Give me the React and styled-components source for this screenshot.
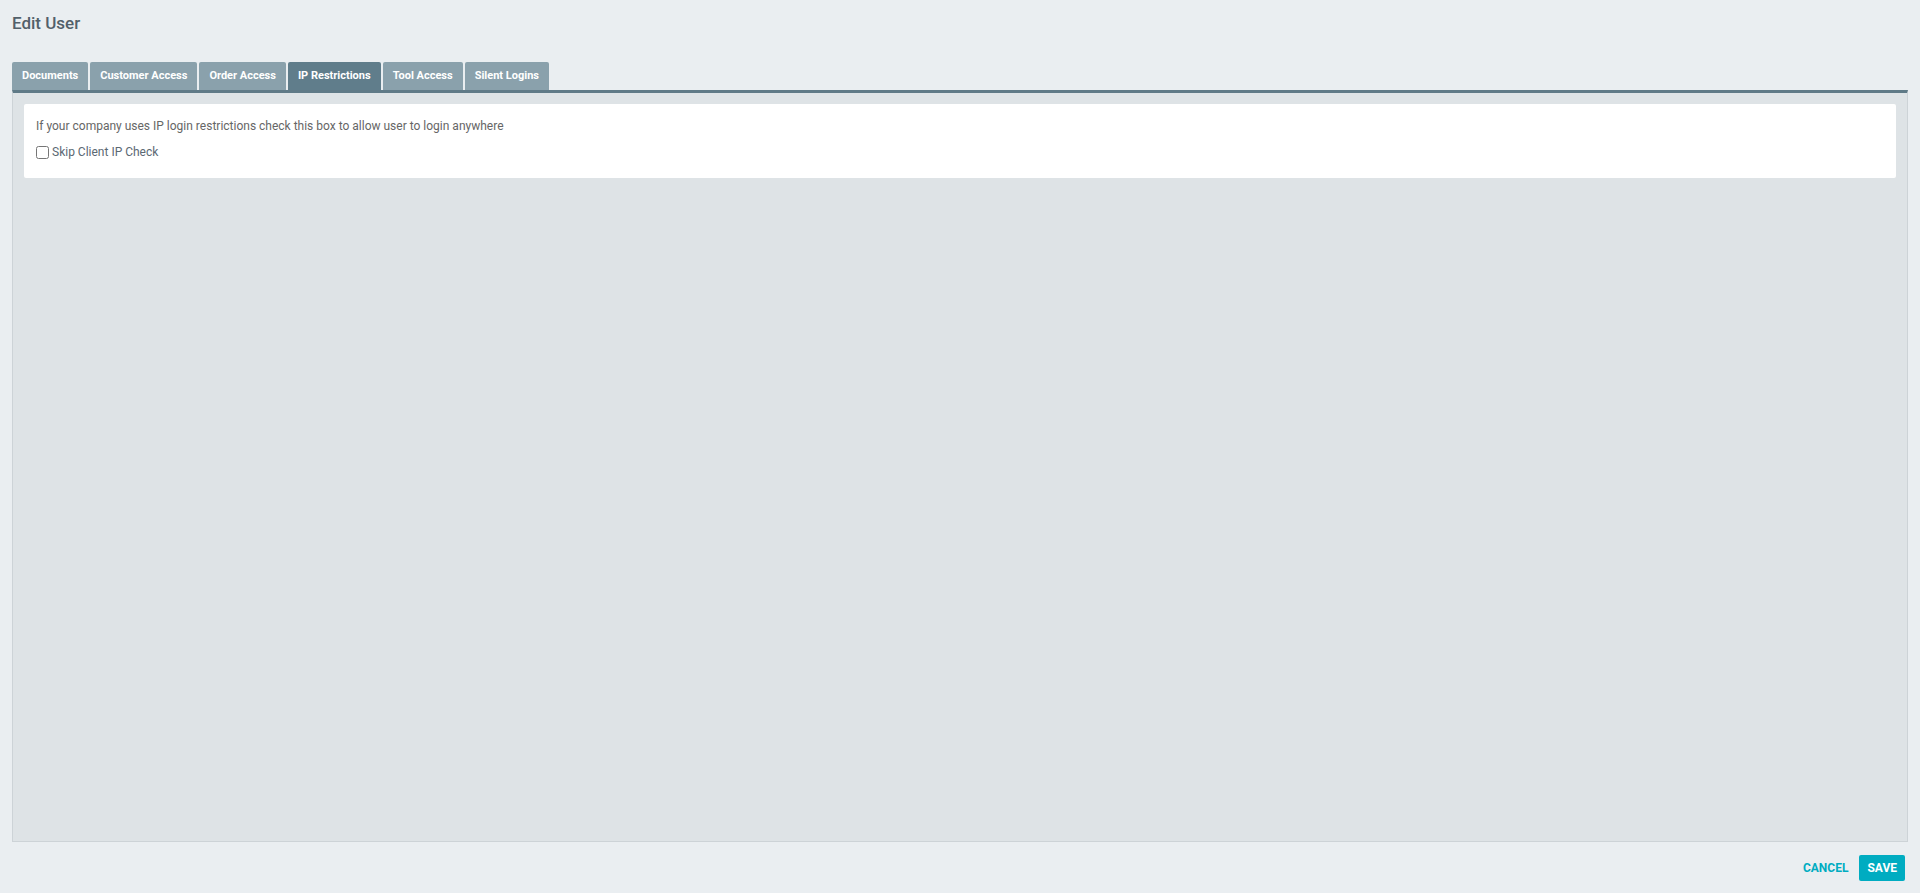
import { useState } from "react";
import styled, { createGlobalStyle } from "styled-components";

const GlobalStyle = createGlobalStyle`
  html, body {
    margin: 0;
    padding: 0;
    background: #eaeef1;
    font-family: Roboto, "Liberation Sans", Arial, sans-serif;
  }
  * {
    box-sizing: border-box;
  }
`;

const Page = styled.div`
  display: flex;
  flex-direction: column;
  height: 100vh;
  padding: 0 12px;
`;

const Title = styled.h1`
  margin: 13px 0 29px;
  font-size: 17px;
  line-height: 20px;
  font-weight: 500;
  color: #52606a;
`;

const TabBar = styled.div`
  display: flex;
  height: 28px;
`;

const Tab = styled.button`
  height: 28px;
  margin-right: 2px;
  padding: 0 10px 1px;
  border: none;
  border-radius: 2px 2px 0 0;
  background: ${(p) => (p.$active ? "#607d8b" : "#8aa1ac")};
  color: #fff;
  font-family: inherit;
  font-size: 11px;
  font-weight: 700;
  cursor: pointer;
`;

const Panel = styled.div`
  flex: 1;
  padding: 11px;
  background: #dee3e6;
  border-top: 3px solid #5f7a87;
  border-left: 1px solid #cdd3d7;
  border-right: 1px solid #cdd3d7;
  border-bottom: 1px solid #cdd3d7;
`;

const Card = styled.div`
  height: 74px;
  padding: 14px 12px 0;
  background: #fff;
  border-radius: 2px;
`;

const Hint = styled.p`
  margin: 0 0 10px;
  font-size: 12px;
  line-height: 16px;
  color: #666;
`;

const CheckLabel = styled.label`
  display: flex;
  align-items: center;
  height: 16px;
  font-size: 12px;
  color: #5b6873;
  cursor: pointer;

  input {
    width: 13px;
    height: 13px;
    margin: 0 3px 0 0;
  }
`;

const Footer = styled.div`
  display: flex;
  justify-content: flex-end;
  align-items: center;
  padding: 13px 3px 12px 0;
`;

const Button = styled.button`
  height: 26px;
  padding: 0 8px;
  border: none;
  border-radius: 2px;
  background: ${(p) => (p.$primary ? "#00acc1" : "transparent")};
  color: ${(p) => (p.$primary ? "#fff" : "#00acc1")};
  font-family: inherit;
  font-size: 12px;
  font-weight: 700;
  text-transform: uppercase;
  cursor: pointer;
  & + & {
    margin-left: 3px;
  }
`;

const tabs = [
  "Documents",
  "Customer Access",
  "Order Access",
  "IP Restrictions",
  "Tool Access",
  "Silent Logins",
];

function App() {
  const [active, setActive] = useState("IP Restrictions");
  const [skipCheck, setSkipCheck] = useState(false);

  return (
    <>
      <GlobalStyle />
      <Page>
        <Title>Edit User</Title>
        <TabBar>
          {tabs.map((t) => (
            <Tab key={t} $active={t === active} onClick={() => setActive(t)}>
              {t}
            </Tab>
          ))}
        </TabBar>
        <Panel>
          <Card>
            <Hint>
              If your company uses IP login restrictions check this box to allow
              user to login anywhere
            </Hint>
            <CheckLabel>
              <input
                type="checkbox"
                checked={skipCheck}
                onChange={(e) => setSkipCheck(e.target.checked)}
              />
              Skip Client IP Check
            </CheckLabel>
          </Card>
        </Panel>
        <Footer>
          <Button>Cancel</Button>
          <Button $primary>Save</Button>
        </Footer>
      </Page>
    </>
  );
}

export default App;
